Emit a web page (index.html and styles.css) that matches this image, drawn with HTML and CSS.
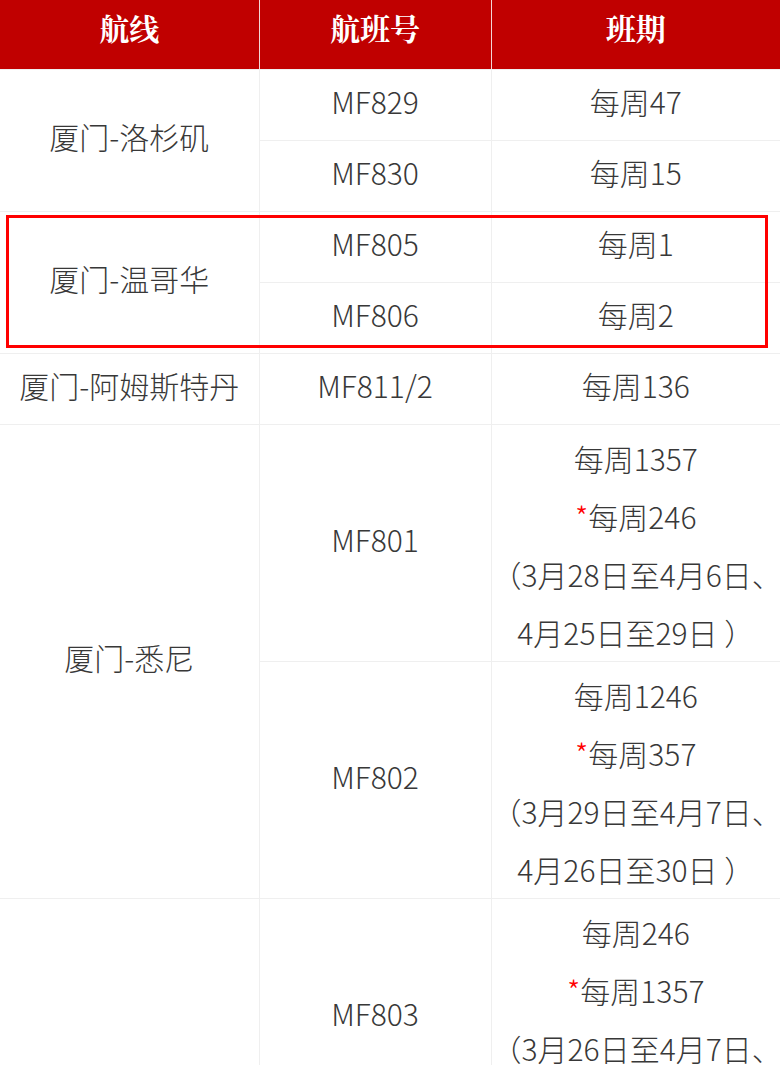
FILE: index.html
```html
<!DOCTYPE html>
<html lang="zh-CN">
<head>
<meta charset="utf-8">
<title>航线班期</title>
<link rel="stylesheet" href="styles.css">
</head>
<body>
<div class="wrap">
  <table class="sched">
    <colgroup>
      <col class="c-route">
      <col class="c-flight">
      <col class="c-days">
    </colgroup>
    <thead>
      <tr>
        <th class="first">航线</th>
        <th>航班号</th>
        <th class="last">班期</th>
      </tr>
    </thead>
    <tbody>
      <tr class="single">
        <td class="first" rowspan="2">厦门-洛杉矶</td>
        <td>MF829</td>
        <td class="last">每周47</td>
      </tr>
      <tr class="single">
        <td>MF830</td>
        <td class="last">每周15</td>
      </tr>
      <tr class="single">
        <td class="first" rowspan="2">厦门-温哥华</td>
        <td>MF805</td>
        <td class="last">每周1</td>
      </tr>
      <tr class="single">
        <td>MF806</td>
        <td class="last">每周2</td>
      </tr>
      <tr class="single">
        <td class="first">厦门-阿姆斯特丹</td>
        <td>MF811/2</td>
        <td class="last">每周136</td>
      </tr>
      <tr class="multi">
        <td class="first" rowspan="2">厦门-悉尼</td>
        <td>MF801</td>
        <td class="last days">每周1357<br><span class="star">*</span>每周246<br>（3月28日至4月6日、<br>4月25日至29日 ）</td>
      </tr>
      <tr class="multi">
        <td>MF802</td>
        <td class="last days">每周1246<br><span class="star">*</span>每周357<br>（3月29日至4月7日、<br>4月26日至30日 ）</td>
      </tr>
      <tr class="multi">
        <td class="first" rowspan="2">厦门-墨尔本</td>
        <td>MF803</td>
        <td class="last days">每周246<br><span class="star">*</span>每周1357<br>（3月26日至4月7日、<br>4月25日至29日 ）</td>
      </tr>
      <tr class="multi">
        <td>MF804</td>
        <td class="last days">每周1357<br><span class="star">*</span>每周246<br>（3月27日至4月8日、<br>4月26日至30日 ）</td>
      </tr>
    </tbody>
  </table>
  <div class="highlight" aria-hidden="true"></div>
</div>
</body>
</html>
```
FILE: styles.css
```css
html, body {
  margin: 0;
  padding: 0;
  background: #ffffff;
}

.wrap {
  position: relative;
  width: 780px;
}

.sched {
  width: 780px;
  border-collapse: collapse;
  table-layout: fixed;
  font-family: "Noto Sans CJK SC Light", "Noto Sans CJK SC DemiLight", "Noto Sans CJK SC", "Noto Sans", sans-serif;
  font-weight: 300;
  font-size: 30px;
  color: #383838;
  text-align: center;
}

.c-route { width: 259px; }
.c-flight { width: 232px; }
.c-days { width: 289px; }

.sched th {
  background: #c00000;
  color: #ffffff;
  font-family: "Noto Serif CJK SC", "Noto Sans CJK SC", serif;
  font-weight: 700;
  font-size: 30px;
  height: 69px;
  padding: 0 0 14px;
  box-sizing: border-box;
  border-left: 1px solid #f3d6d6;
  border-right: 1px solid #f3d6d6;
  border-bottom: 1px solid #f0f0f0;
  vertical-align: middle;
}

.sched td {
  border: 1px solid #efefef;
  padding: 0 0 8px;
  line-height: 58px;
  vertical-align: middle;
  white-space: nowrap;
}

.sched tr.single td {
  height: 62px;
}

.sched td.days {
  padding: 4px 0 0;
}

.sched .first { border-left: none; }
.sched .last { border-right: none; }

.star {
  color: #ff0000;
}

.highlight {
  position: absolute;
  left: 6px;
  top: 215px;
  width: 756px;
  height: 127px;
  border: 3px solid #ff0000;
  pointer-events: none;
}
```
